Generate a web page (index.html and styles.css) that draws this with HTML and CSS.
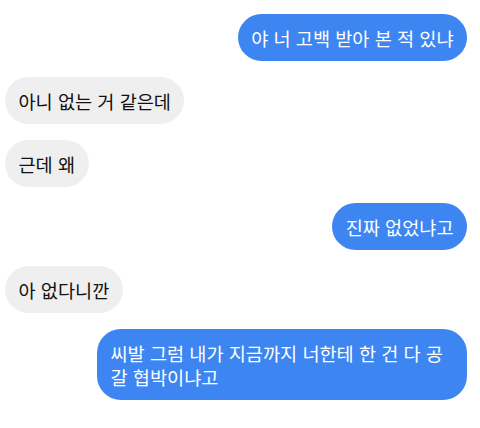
FILE: index.html
```html
<!DOCTYPE html>
<html lang="ko">
<head>
    <meta charset="UTF-8">
    <meta name="viewport" content="width=device-width, initial-scale=1.0">
    <title>채팅</title>
    <link rel="stylesheet" href="styles.css">
</head>
<body>

<div class="chat">
    <div class="msg me">야 너 고백 받아 본 적 있냐</div>
    <div class="msg you">아니 없는 거 같은데</div>
    <div class="msg you">근데 왜</div>
    <div class="msg me">진짜 없었냐고</div>
    <div class="msg you">아 없다니깐</div>
    <div class="msg me">씨발 그럼 내가 지금까지 너한테 한 건 다 공갈 협박이냐고</div>
</div>

</body>
</html>
```

FILE: styles.css
```css
body { margin: 0; background: #fff; font-family: "Noto Sans CJK KR", "Noto Sans", sans-serif; }
.chat { display: flex; flex-direction: column; gap: 16px; padding: 14px 13px 0 5px; }
.msg {
    max-width: 370px; padding: 11.5px 13.5px; border-radius: 24px;
    font-size: 18.6px; line-height: 24px; box-sizing: border-box;
}
.me { align-self: flex-end; background: #3d86f2; color: #fff; }
.you { align-self: flex-start; background: #efefef; color: #111; }
```
